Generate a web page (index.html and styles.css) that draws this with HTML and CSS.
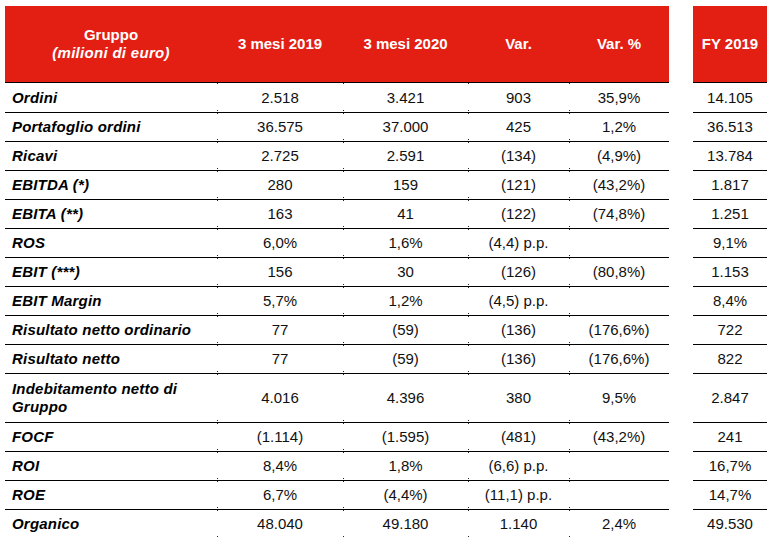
FILE: index.html
```html
<!DOCTYPE html>
<html lang="it">
<head>
<meta charset="utf-8">
<title>Gruppo - dati principali</title>
<link rel="stylesheet" href="styles.css">
</head>
<body>
<table class="kpi">
  <colgroup>
    <col class="c-label">
    <col class="c-q">
    <col class="c-q2">
    <col class="c-var">
    <col class="c-varp">
    <col class="c-gap">
    <col class="c-fy">
  </colgroup>
  <thead>
    <tr>
      <th class="head">Gruppo<br><em>(milioni di euro)</em></th>
      <th class="head">3 mesi 2019</th>
      <th class="head">3 mesi 2020</th>
      <th class="head">Var.</th>
      <th class="head">Var. %</th>
      <th class="gap"></th>
      <th class="head">FY 2019</th>
    </tr>
  </thead>
  <tbody>
    <tr class="first"><td class="lbl">Ordini</td><td class="n">2.518</td><td class="n">3.421</td><td class="n">903</td><td class="n">35,9%</td><td class="gap"></td><td class="fy">14.105</td></tr>
    <tr><td class="lbl">Portafoglio ordini</td><td class="n">36.575</td><td class="n">37.000</td><td class="n">425</td><td class="n">1,2%</td><td class="gap"></td><td class="fy">36.513</td></tr>
    <tr><td class="lbl">Ricavi</td><td class="n">2.725</td><td class="n">2.591</td><td class="n">(134)</td><td class="n">(4,9%)</td><td class="gap"></td><td class="fy">13.784</td></tr>
    <tr><td class="lbl">EBITDA (*)</td><td class="n">280</td><td class="n">159</td><td class="n">(121)</td><td class="n">(43,2%)</td><td class="gap"></td><td class="fy">1.817</td></tr>
    <tr><td class="lbl">EBITA (**)</td><td class="n">163</td><td class="n">41</td><td class="n">(122)</td><td class="n">(74,8%)</td><td class="gap"></td><td class="fy">1.251</td></tr>
    <tr><td class="lbl">ROS</td><td class="n">6,0%</td><td class="n">1,6%</td><td class="n">(4,4) p.p.</td><td class="n"></td><td class="gap"></td><td class="fy">9,1%</td></tr>
    <tr><td class="lbl">EBIT (***)</td><td class="n">156</td><td class="n">30</td><td class="n">(126)</td><td class="n">(80,8%)</td><td class="gap"></td><td class="fy">1.153</td></tr>
    <tr><td class="lbl">EBIT Margin</td><td class="n">5,7%</td><td class="n">1,2%</td><td class="n">(4,5) p.p.</td><td class="n"></td><td class="gap"></td><td class="fy">8,4%</td></tr>
    <tr><td class="lbl">Risultato netto ordinario</td><td class="n">77</td><td class="n">(59)</td><td class="n">(136)</td><td class="n">(176,6%)</td><td class="gap"></td><td class="fy">722</td></tr>
    <tr><td class="lbl">Risultato netto</td><td class="n">77</td><td class="n">(59)</td><td class="n">(136)</td><td class="n">(176,6%)</td><td class="gap"></td><td class="fy">822</td></tr>
    <tr class="tall"><td class="lbl">Indebitamento netto di<br>Gruppo</td><td class="n">4.016</td><td class="n">4.396</td><td class="n">380</td><td class="n">9,5%</td><td class="gap"></td><td class="fy">2.847</td></tr>
    <tr><td class="lbl">FOCF</td><td class="n">(1.114)</td><td class="n">(1.595)</td><td class="n">(481)</td><td class="n">(43,2%)</td><td class="gap"></td><td class="fy">241</td></tr>
    <tr><td class="lbl">ROI</td><td class="n">8,4%</td><td class="n">1,8%</td><td class="n">(6,6) p.p.</td><td class="n"></td><td class="gap"></td><td class="fy">16,7%</td></tr>
    <tr><td class="lbl">ROE</td><td class="n">6,7%</td><td class="n">(4,4%)</td><td class="n">(11,1) p.p.</td><td class="n"></td><td class="gap"></td><td class="fy">14,7%</td></tr>
    <tr class="last"><td class="lbl">Organico</td><td class="n">48.040</td><td class="n">49.180</td><td class="n">1.140</td><td class="n">2,4%</td><td class="gap"></td><td class="fy">49.530</td></tr>
  </tbody>
</table>
</body>
</html>
```

FILE: styles.css
```css
html, body {
  margin: 0;
  padding: 0;
  background: #ffffff;
}

body {
  padding: 6px 0 0 5px;
  font-family: "Liberation Sans", Arial, sans-serif;
  font-size: 15px;
  color: #111111;
}

.kpi {
  border-collapse: collapse;
  table-layout: fixed;
  width: 762px;
}

.c-label { width: 212px; }
.c-q { width: 126px; }
.c-q2 { width: 125px; }
.c-var { width: 101px; }
.c-varp { width: 100px; }
.c-gap { width: 24px; }
.c-fy { width: 74px; }

.kpi th,
.kpi td {
  padding: 0;
  text-align: center;
  vertical-align: middle;
}

.kpi th.head {
  height: 76px;
  background: #e31f14;
  color: #ffffff;
  font-weight: bold;
  line-height: 18px;
  border-bottom: 1px solid #000000;
}

.kpi th.head em {
  font-style: italic;
  letter-spacing: 0.3px;
}

.kpi td {
  height: 28px;
  line-height: 18px;
  border-bottom: 1px solid #000000;
}

.kpi tr.first td {
  height: 29px;
}

.kpi tr.tall td {
  height: 48px;
}

.kpi tr.last td {
  border-bottom: none;
}

.kpi .gap,
.kpi tr td.gap,
.kpi th.gap {
  background: #ffffff;
  border-bottom: none;
}

.kpi td.lbl {
  text-align: left;
  padding-left: 7px;
  font-weight: bold;
  font-style: italic;
  letter-spacing: 0.2px;
  color: #000000;
}

.kpi td.n {
  background:
    linear-gradient(#222222, #222222) left top / 1px 1px no-repeat,
    linear-gradient(#222222, #222222) left bottom 1px / 1px 1px no-repeat;
}
```
